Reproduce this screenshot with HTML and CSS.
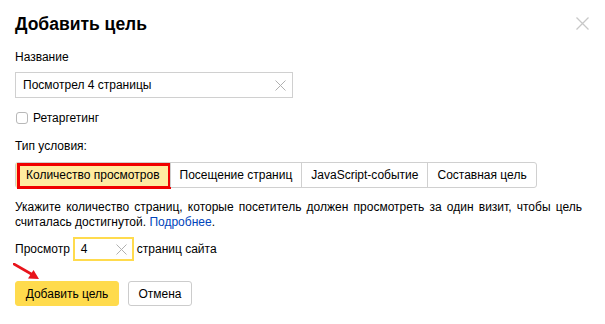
FILE: index.html
```html
<!DOCTYPE html>
<html lang="ru">
<head>
<meta charset="utf-8">
<title>Добавить цель</title>
<link rel="stylesheet" href="styles.css">
</head>
<body>
<div class="dialog">
  <button class="close" aria-label="Закрыть">
    <svg width="13" height="13" viewBox="0 0 13 13"><path d="M0.5 0.5L12.5 12.5M12.5 0.5L0.5 12.5" stroke="#c8c8c8" stroke-width="1.3" fill="none"/></svg>
  </button>
  <h1 class="title">Добавить цель</h1>
  <div class="label">Название</div>
  <div class="input name-input">
    <span class="input-text">Посмотрел 4 страницы</span>
    <svg class="clear" width="11" height="11" viewBox="0 0 11 11"><path d="M0.5 0.5L10.5 10.5M10.5 0.5L0.5 10.5" stroke="#b0b0b0" stroke-width="1" fill="none"/></svg>
  </div>
  <label class="check-row"><span class="checkbox"></span><span>Ретаргетинг</span></label>
  <div class="label type-label">Тип условия:</div>
  <div class="tabs">
    <div class="tab tab-active">Количество просмотров</div>
    <div class="tab">Посещение страниц</div>
    <div class="tab">JavaScript-событие</div>
    <div class="tab">Составная цель</div>
  </div>
  <p class="desc">Укажите количество страниц, которые посетитель должен просмотреть за один визит, чтобы цель считалась достигнутой. <a class="link" href="#">Подробнее</a>.</p>
  <div class="views-row">
    <span>Просмотр</span>
    <div class="input small-input">
      <span class="input-text">4</span>
      <svg class="clear" width="11" height="11" viewBox="0 0 11 11"><path d="M0.5 0.5L10.5 10.5M10.5 0.5L0.5 10.5" stroke="#b0b0b0" stroke-width="1" fill="none"/></svg>
    </div>
    <span>страниц сайта</span>
  </div>
  <div class="actions">
    <button class="btn btn-primary">Добавить цель</button>
    <button class="btn btn-default">Отмена</button>
  </div>
  <svg class="arrow" width="30" height="20" viewBox="0 0 30 20"><path d="M1 1L20 12" stroke="#e8141b" stroke-width="2.6" stroke-linecap="round" fill="none"/><path d="M26 16L15 15.5L20.5 7Z" fill="#e8141b"/></svg>
</div>
</body>
</html>
```
FILE: styles.css
```css
* { box-sizing: border-box; }
html, body { margin: 0; padding: 0; background: #fff; }
body {
  font-family: Arial, "Liberation Sans", Helvetica, sans-serif;
  font-size: 12px;
  color: #000;
}
.dialog {
  position: relative;
  padding: 12px 15px 0 15px;
  width: 605px;
  height: 324px;
}
.close {
  position: absolute;
  top: 17px;
  right: 16px;
  border: 0;
  background: none;
  padding: 0;
  width: 13px;
  height: 13px;
  display: block;
}
.close svg { display: block; }
.title {
  margin: 0;
  font-size: 17.5px;
  line-height: 24px;
  font-weight: bold;
}
.label {
  margin-top: 13px;
  line-height: 16px;
}
.input {
  display: flex;
  align-items: center;
  border: 1px solid #d0d0d0;
  background: #fff;
}
.input-text { flex: 1; }
.name-input {
  margin-top: 7px;
  width: 278px;
  height: 26px;
  padding: 0 6px 0 7px;
}
.clear { display: block; flex: none; }
.check-row {
  display: flex;
  align-items: center;
  margin-top: 12px;
  line-height: 16px;
  gap: 5px;
  padding-left: 1px;
}
.checkbox {
  width: 12px;
  height: 12px;
  border: 1px solid #b8b8b8;
  border-radius: 3px;
  background: #fff;
}
.type-label { margin-top: 12px; }
.tabs {
  margin-top: 8px;
  display: inline-flex;
  border: 1px solid #d0d0d0;
  border-radius: 3px;
  height: 26px;
}
.tab {
  position: relative;
  display: flex;
  align-items: center;
  padding: 0 9px;
  border-left: 1px solid #d0d0d0;
  white-space: nowrap;
}
.tab:first-child { border-left: 0; }
.tab-active {
  background: #ffeba0;
  padding: 0 10px 0 10px;
}
.tab-active::after {
  content: "";
  position: absolute;
  left: 1px;
  right: -1px;
  top: 0;
  bottom: -2px;
  border: 3px solid #f00000;
}
.desc {
  margin: 12px 0 0;
  line-height: 15px;
  width: 567px;
  text-align: justify;
}
.link { color: #0044bb; text-decoration: none; }
.views-row {
  margin-top: 7px;
  display: flex;
  align-items: center;
  gap: 3px;
}
.small-input {
  width: 61px;
  height: 24px;
  border: 2px solid #ffdb4d;
  padding: 0 5px 0 6px;
}
.actions {
  margin-top: 20px;
  display: flex;
  gap: 9px;
}
.btn {
  font-family: inherit;
  font-size: 12px;
  height: 25px;
  border-radius: 3px;
  padding: 0;
  color: #000;
}
.btn-primary {
  width: 104px;
  background: #ffdb4d;
  border: 1px solid #ffdb4d;
}
.btn-default {
  width: 64px;
  background: #fff;
  border: 1px solid #ccc;
}
.arrow {
  position: absolute;
  left: 13px;
  top: 263px;
}
```
